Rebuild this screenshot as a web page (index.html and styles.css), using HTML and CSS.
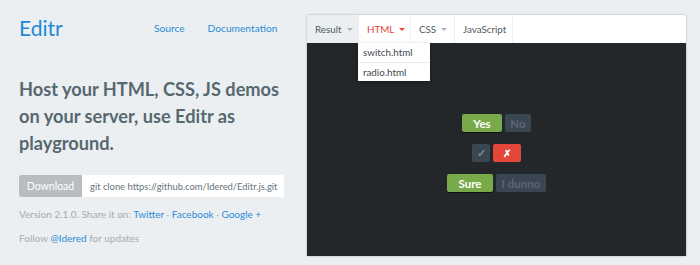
FILE: index.html
```html
<!DOCTYPE html>
<html>
<head>
<meta charset="utf-8">
<link rel="stylesheet" href="styles.css">
</head>
<body>
<div class="page">
  <div class="intro">
    <header class="top">
      <a class="logo">Editr</a>
      <nav class="nav">
        <a>Source</a>
        <a>Documentation</a>
      </nav>
    </header>
    <h1 class="headline">Host your HTML, CSS, JS demos on your server, use Editr as playground.</h1>
    <div class="download">
      <span class="dl-btn">Download</span>
      <span class="dl-cmd">git clone https://github.com/Idered/Editr.js.git</span>
    </div>
    <p class="meta">Version 2.1.0. Share it on: <a>Twitter</a> · <a>Facebook</a> · <a>Google +</a></p>
    <p class="meta follow">Follow <a>@Idered</a> for updates</p>
  </div>
  <div class="editor">
    <div class="tabs">
      <div class="tab tab-result">Result <span class="caret"></span></div>
      <div class="tab tab-html">HTML <span class="caret caret-red"></span>
        <ul class="dropdown">
          <li>switch.html</li>
          <li>radio.html</li>
        </ul>
      </div>
      <div class="tab tab-css">CSS <span class="caret"></span></div>
      <div class="tab tab-js">JavaScript</div>
    </div>
    <div class="stage">
      <div class="row">
        <span class="btn btn-green w-yes">Yes</span><span class="btn btn-dim w-no">No</span>
      </div>
      <div class="row">
        <span class="btn btn-dim btn-sm">✓</span><span class="btn btn-red btn-x">✗</span>
      </div>
      <div class="row">
        <span class="btn btn-green w-sure">Sure</span><span class="btn btn-dim w-dunno">I dunno</span>
      </div>
    </div>
  </div>
</div>
</body>
</html>
```

FILE: styles.css
```css
* { box-sizing: border-box; }
html, body { margin: 0; padding: 0; }
body {
  background: #eceff1;
  font-family: Lato, "Open Sans", sans-serif;
  width: 700px;
  height: 265px;
  overflow: hidden;
}
a { color: #2a8bd6; text-decoration: none; }
.page {
  display: flex;
  align-items: flex-start;
}
.intro {
  width: 306px;
  padding: 11px 0 0 19px;
}
.top {
  display: flex;
  align-items: center;
  height: 32px;
}
.logo {
  font-size: 21px;
  color: #1f87d8;
  font-weight: 400;
  width: 135px;
}
.nav {
  display: flex;
  gap: 23px;
  font-size: 10.2px;
  padding-top: 2px;
}
.nav a { color: #2a8bd6; }
.headline {
  margin: 33px 0 0;
  font-size: 18.2px;
  font-weight: 700;
  line-height: 27px;
  color: #566870;
  width: 275px;
}
.download {
  display: flex;
  margin-top: 18px;
  height: 22px;
  width: 265px;
  font-size: 9.4px;
}
.dl-btn {
  background: #b7bdc1;
  color: #fff;
  display: flex;
  align-items: center;
  border-radius: 2px 0 0 2px;
  width: 63px;
  justify-content: center;
  font-size: 10.5px;
}
.dl-cmd {
  background: #fff;
  color: #67747a;
  display: flex;
  align-items: center;
  padding-left: 8px;
  flex: 1;
  white-space: nowrap;
  overflow: hidden;
}
.meta {
  margin: 11px 0 0;
  font-size: 10px;
  color: #a3acb1;
}
.meta a { color: #2a8bd6; }
.follow { margin-top: 12px; }
.editor {
  margin-top: 14px;
  width: 381px;
  height: 243px;
  border: 1px solid #d3d8db;
  border-radius: 3px;
  display: flex;
  flex-direction: column;
  box-shadow: 0 0 2px rgba(0,0,0,0.08);
}
.tabs {
  display: flex;
  height: 28px;
  background: #fff;
  border-radius: 2px 2px 0 0;
  font-size: 9.8px;
  color: #4e5b61;
  position: relative;
  z-index: 2;
}
.tab {
  display: flex;
  align-items: center;
  padding: 0 8px;
  border-right: 1px solid #eef0f1;
  position: relative;
}
.tab-result { background: #eceff1; width: 52px; border-right: 0; }
.tab-html { color: #e8453c; width: 52px; }
.tab-css { width: 44px; }
.tab-js { width: 58px; }
.caret {
  display: inline-block;
  width: 0; height: 0;
  border-left: 3px solid transparent;
  border-right: 3px solid transparent;
  border-top: 3px solid #aab2b7;
  margin-left: 5px;
}
.caret-red { border-top-color: #e8453c; }
.dropdown {
  position: absolute;
  top: 28px;
  left: -1px;
  margin: 0;
  padding: 0;
  list-style: none;
  background: #fff;
  width: 72px;
  box-shadow: 0 1px 3px rgba(0,0,0,0.35);
  color: #3f4a50;
  font-size: 9.8px;
}
.dropdown li {
  height: 19px;
  line-height: 18px;
  padding-left: 5px;
}
.dropdown li + li { border-top: 1px solid #e9ecee; }
.stage {
  flex: 1;
  background: #23272a;
  display: flex;
  flex-direction: column;
  align-items: center;
  padding-top: 71px;
  gap: 12px;
}
.row { display: flex; gap: 3px; }
.btn {
  height: 18px;
  display: inline-flex;
  align-items: center;
  justify-content: center;
  font-size: 11.5px;
  font-weight: 700;
  border-radius: 2px;
  white-space: nowrap;
}
.btn-green {
  background: #78a94a;
  color: #fff;
  box-shadow: 0 1px 0 #0e1012;
}
.btn-dim {
  background: #3a4652;
  color: #5a6873;
}
.btn-red { background: #e2473a; color: #fff; font-size: 10px; }
.btn-sm { width: 18px; font-size: 11px; color: #7a8893; }
.btn-x { width: 28px; }
.w-yes { width: 40px; }
.w-no { width: 26px; }
.w-sure { width: 46px; }
.w-dunno { width: 50px; }
```
